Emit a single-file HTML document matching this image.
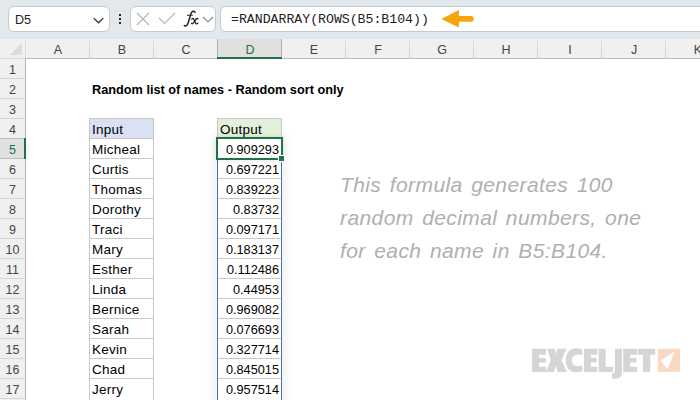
<!DOCTYPE html>
<html><head><meta charset="utf-8">
<style>
*{margin:0;padding:0;box-sizing:border-box}
html,body{width:700px;height:400px;overflow:hidden;background:#fff;font-family:"Liberation Sans",sans-serif}
body{position:relative}
div,span,svg{position:absolute}
.box{background:#fff;border:1px solid #c6cacd;border-radius:6px}
.ch{top:40px;height:19px;width:64px;font-size:12.5px;color:#444;text-align:center;line-height:20px}
.rh{left:0;width:25px;height:20px;font-size:12.5px;color:#444;text-align:center;line-height:22px}
.vl{width:1px;background:#d4d4d4}
.hl{height:1px;background:#d4d4d4}
.nm{left:92px;height:20px;font-size:13.5px;line-height:21px;color:#000;white-space:nowrap;letter-spacing:0.25px}
.nu{left:218px;width:61px;height:20px;font-size:12.72px;line-height:22px;color:#000;white-space:nowrap;text-align:right}
.note{left:340px;font-size:21px;line-height:24px;color:#afafaf;white-space:nowrap;font-style:italic;letter-spacing:0.4px;word-spacing:2.3px}
</style></head><body>

<div style="left:0;top:0;width:700px;height:39px;background:#e2e8ec"></div>
<div class="box" style="left:8px;top:6px;width:102px;height:26px"></div>
<span style="left:15px;top:10.5px;font-size:12.6px;line-height:18px;color:#222">D5</span>
<svg style="left:92px;top:15px" width="13" height="10" viewBox="0 0 13 10"><path d="M1.7 3.1 L6.5 7.8 L11.3 3.1" fill="none" stroke="#333" stroke-width="1.3"/></svg>
<div style="left:119px;top:14px;width:2px;height:2px;background:#222"></div>
<div style="left:119px;top:18px;width:2px;height:2px;background:#222"></div>
<div style="left:119px;top:22px;width:2px;height:2px;background:#222"></div>
<div class="box" style="left:130px;top:6px;width:86px;height:26px"></div>
<svg style="left:136px;top:12px" width="14" height="14" viewBox="0 0 14 14"><path d="M1 1 L13 13 M13 1 L1 13" fill="none" stroke="#b4b4b4" stroke-width="1.1"/></svg>
<svg style="left:158px;top:12px" width="18" height="13" viewBox="0 0 18 13"><path d="M1 6 L6.5 11.5 L17 1" fill="none" stroke="#b4b4b4" stroke-width="1.1"/></svg>
<svg style="left:180px;top:8px" width="22" height="22" viewBox="180 8 22 22"><g fill="none" stroke="#222" stroke-linecap="round"><path d="M195 12.4C194.6 11.1 192.8 10.7 191.7 12.2C190.6 13.8 188.6 22.2 187.6 24.3C186.9 25.8 185.2 26.4 184.3 25.5" stroke-width="1.5"/><path d="M187.3 15.2H192.3" stroke-width="1.1"/><path d="M191.7 19.1C192.5 18.1 193.5 18.2 194 19.5L195.5 22.9C196 24 197 24.1 197.8 23.3" stroke-width="1.3"/><path d="M198 18.9C197.2 18.2 196.4 18.5 195.8 19.3L193.6 22.7C192.9 23.8 192 24 191.5 23.4" stroke-width="1.3"/></g></svg>
<svg style="left:202px;top:15px" width="12" height="9" viewBox="0 0 12 9"><path d="M1 2 L6 7 L11 2" fill="none" stroke="#8a8a8a" stroke-width="1.1"/></svg>
<div class="box" style="left:220px;top:6px;width:500px;height:26px"></div>
<span style="left:231px;top:10px;font-family:'Liberation Mono',monospace;font-size:13.2px;line-height:19px;color:#222">=RANDARRAY(ROWS(B5:B104))</span>
<svg style="left:435px;top:5px" width="45" height="30" viewBox="0 0 45 30"><path d="M6.4 13.9 L23.9 5.1 L23.9 11.1 L36.1 11.1 A2.78 2.78 0 0 1 36.1 16.65 L23.9 16.65 L23.9 22.5 Z" fill="#f6a50a"/></svg>
<div style="left:0;top:39px;width:700px;height:20px;background:#f0f0f0"></div>
<div style="left:0;top:59px;width:25px;height:341px;background:#f0f0f0"></div>
<div style="left:218px;top:39px;width:63px;height:19px;background:#e0e0e0"></div>
<div style="left:0;top:139px;width:25px;height:19px;background:#e0e0e0"></div>
<div class="vl" style="left:89px;top:41px;height:17px;background:#d6d6d6"></div>
<div class="vl" style="left:153px;top:41px;height:17px;background:#d6d6d6"></div>
<div class="vl" style="left:217px;top:39px;height:19px;background:#b0b0b0"></div>
<div class="vl" style="left:281px;top:39px;height:19px;background:#b0b0b0"></div>
<div class="vl" style="left:345px;top:41px;height:17px;background:#d6d6d6"></div>
<div class="vl" style="left:409px;top:41px;height:17px;background:#d6d6d6"></div>
<div class="vl" style="left:473px;top:41px;height:17px;background:#d6d6d6"></div>
<div class="vl" style="left:537px;top:41px;height:17px;background:#d6d6d6"></div>
<div class="vl" style="left:601px;top:41px;height:17px;background:#d6d6d6"></div>
<div class="vl" style="left:665px;top:41px;height:17px;background:#d6d6d6"></div>
<div class="vl" style="left:729px;top:41px;height:17px;background:#d6d6d6"></div>
<div class="hl" style="left:0;top:78px;width:25px;background:#d6d6d6"></div>
<div class="hl" style="left:0;top:98px;width:25px;background:#d6d6d6"></div>
<div class="hl" style="left:0;top:118px;width:25px;background:#d6d6d6"></div>
<div class="hl" style="left:0;top:138px;width:25px;background:#bdbdbd"></div>
<div class="hl" style="left:0;top:158px;width:25px;background:#bdbdbd"></div>
<div class="hl" style="left:0;top:178px;width:25px;background:#d6d6d6"></div>
<div class="hl" style="left:0;top:198px;width:25px;background:#d6d6d6"></div>
<div class="hl" style="left:0;top:218px;width:25px;background:#d6d6d6"></div>
<div class="hl" style="left:0;top:238px;width:25px;background:#d6d6d6"></div>
<div class="hl" style="left:0;top:258px;width:25px;background:#d6d6d6"></div>
<div class="hl" style="left:0;top:278px;width:25px;background:#d6d6d6"></div>
<div class="hl" style="left:0;top:298px;width:25px;background:#d6d6d6"></div>
<div class="hl" style="left:0;top:318px;width:25px;background:#d6d6d6"></div>
<div class="hl" style="left:0;top:338px;width:25px;background:#d6d6d6"></div>
<div class="hl" style="left:0;top:358px;width:25px;background:#d6d6d6"></div>
<div class="hl" style="left:0;top:378px;width:25px;background:#d6d6d6"></div>
<div class="hl" style="left:0;top:398px;width:25px;background:#d6d6d6"></div>
<div style="left:0;top:58px;width:25px;height:1px;background:#d8d8d8"></div>
<div style="left:25px;top:58px;width:675px;height:1px;background:#bdbdbd"></div>
<div style="left:25px;top:40px;width:1px;height:18px;background:#dcdcdc"></div>
<div style="left:25px;top:39px;width:1px;height:1px;background:#fff"></div>
<div style="left:25px;top:59px;width:1px;height:341px;background:#b5b5b5"></div>
<svg style="left:10px;top:43px" width="13" height="12" viewBox="0 0 13 12"><path d="M12 0 L12 12 L0 12 Z" fill="#dcdcdc"/></svg>
<div style="left:217px;top:57px;width:65px;height:2px;background:#217346"></div>
<div style="left:24px;top:138px;width:2px;height:21px;background:#217346"></div>
<span class="ch" style="left:26px;color:#444">A</span>
<span class="ch" style="left:90px;color:#444">B</span>
<span class="ch" style="left:154px;color:#444">C</span>
<span class="ch" style="left:218px;color:#217346">D</span>
<span class="ch" style="left:282px;color:#444">E</span>
<span class="ch" style="left:346px;color:#444">F</span>
<span class="ch" style="left:410px;color:#444">G</span>
<span class="ch" style="left:474px;color:#444">H</span>
<span class="ch" style="left:538px;color:#444">I</span>
<span class="ch" style="left:602px;color:#444">J</span>
<span class="ch" style="left:666px;color:#444">K</span>
<span class="rh" style="top:59px;color:#444">1</span>
<span class="rh" style="top:79px;color:#444">2</span>
<span class="rh" style="top:99px;color:#444">3</span>
<span class="rh" style="top:119px;color:#444">4</span>
<span class="rh" style="top:139px;color:#217346">5</span>
<span class="rh" style="top:159px;color:#444">6</span>
<span class="rh" style="top:179px;color:#444">7</span>
<span class="rh" style="top:199px;color:#444">8</span>
<span class="rh" style="top:219px;color:#444">9</span>
<span class="rh" style="top:239px;color:#444">10</span>
<span class="rh" style="top:259px;color:#444">11</span>
<span class="rh" style="top:279px;color:#444">12</span>
<span class="rh" style="top:299px;color:#444">13</span>
<span class="rh" style="top:319px;color:#444">14</span>
<span class="rh" style="top:339px;color:#444">15</span>
<span class="rh" style="top:359px;color:#444">16</span>
<span class="rh" style="top:379px;color:#444">17</span>
<span style="left:92px;top:80px;height:20px;line-height:20px;font-size:12.72px;font-weight:bold;color:#000;white-space:nowrap">Random list of names - Random sort only</span>
<div style="left:217px;top:138px;width:65px;height:300px;background:#fff;box-shadow:0 0 14px rgba(0,0,0,0.10)"></div>
<div style="left:90px;top:119px;width:63px;height:19px;background:#d9e1f2"></div>
<div style="left:218px;top:119px;width:63px;height:19px;background:#e2efda"></div>
<div class="hl" style="left:89px;top:118px;width:65px;background:#c8c8c8"></div>
<div class="hl" style="left:217px;top:118px;width:65px;background:#c8c8c8"></div>
<div class="hl" style="left:89px;top:138px;width:65px;background:#c8c8c8"></div>
<div class="hl" style="left:217px;top:138px;width:65px;background:#c8c8c8"></div>
<div class="hl" style="left:89px;top:158px;width:65px;background:#c8c8c8"></div>
<div class="hl" style="left:217px;top:158px;width:65px;background:#c8c8c8"></div>
<div class="hl" style="left:89px;top:178px;width:65px;background:#c8c8c8"></div>
<div class="hl" style="left:217px;top:178px;width:65px;background:#c8c8c8"></div>
<div class="hl" style="left:89px;top:198px;width:65px;background:#c8c8c8"></div>
<div class="hl" style="left:217px;top:198px;width:65px;background:#c8c8c8"></div>
<div class="hl" style="left:89px;top:218px;width:65px;background:#c8c8c8"></div>
<div class="hl" style="left:217px;top:218px;width:65px;background:#c8c8c8"></div>
<div class="hl" style="left:89px;top:238px;width:65px;background:#c8c8c8"></div>
<div class="hl" style="left:217px;top:238px;width:65px;background:#c8c8c8"></div>
<div class="hl" style="left:89px;top:258px;width:65px;background:#c8c8c8"></div>
<div class="hl" style="left:217px;top:258px;width:65px;background:#c8c8c8"></div>
<div class="hl" style="left:89px;top:278px;width:65px;background:#c8c8c8"></div>
<div class="hl" style="left:217px;top:278px;width:65px;background:#c8c8c8"></div>
<div class="hl" style="left:89px;top:298px;width:65px;background:#c8c8c8"></div>
<div class="hl" style="left:217px;top:298px;width:65px;background:#c8c8c8"></div>
<div class="hl" style="left:89px;top:318px;width:65px;background:#c8c8c8"></div>
<div class="hl" style="left:217px;top:318px;width:65px;background:#c8c8c8"></div>
<div class="hl" style="left:89px;top:338px;width:65px;background:#c8c8c8"></div>
<div class="hl" style="left:217px;top:338px;width:65px;background:#c8c8c8"></div>
<div class="hl" style="left:89px;top:358px;width:65px;background:#c8c8c8"></div>
<div class="hl" style="left:217px;top:358px;width:65px;background:#c8c8c8"></div>
<div class="hl" style="left:89px;top:378px;width:65px;background:#c8c8c8"></div>
<div class="hl" style="left:217px;top:378px;width:65px;background:#c8c8c8"></div>
<div class="vl" style="left:89px;top:118px;height:282px;background:#c8c8c8"></div>
<div class="vl" style="left:153px;top:118px;height:282px;background:#c8c8c8"></div>
<div class="vl" style="left:217px;top:118px;height:22px;background:#c8c8c8"></div>
<div class="vl" style="left:281px;top:118px;height:22px;background:#c8c8c8"></div>
<div class="vl" style="left:217px;top:160px;height:240px;background:#4472c4"></div>
<div class="vl" style="left:281px;top:161px;height:239px;background:#4472c4"></div>
<span class="nm" style="top:119px">Input</span>
<span class="nm" style="left:220px;top:119px">Output</span>
<span class="nm" style="top:139px">Micheal</span>
<span class="nu" style="top:139px">0.909293</span>
<span class="nm" style="top:159px">Curtis</span>
<span class="nu" style="top:159px">0.697221</span>
<span class="nm" style="top:179px">Thomas</span>
<span class="nu" style="top:179px">0.839223</span>
<span class="nm" style="top:199px">Dorothy</span>
<span class="nu" style="top:199px">0.83732</span>
<span class="nm" style="top:219px">Traci</span>
<span class="nu" style="top:219px">0.097171</span>
<span class="nm" style="top:239px">Mary</span>
<span class="nu" style="top:239px">0.183137</span>
<span class="nm" style="top:259px">Esther</span>
<span class="nu" style="top:259px">0.112486</span>
<span class="nm" style="top:279px">Linda</span>
<span class="nu" style="top:279px">0.44953</span>
<span class="nm" style="top:299px">Bernice</span>
<span class="nu" style="top:299px">0.969082</span>
<span class="nm" style="top:319px">Sarah</span>
<span class="nu" style="top:319px">0.076693</span>
<span class="nm" style="top:339px">Kevin</span>
<span class="nu" style="top:339px">0.327714</span>
<span class="nm" style="top:359px">Chad</span>
<span class="nu" style="top:359px">0.845015</span>
<span class="nm" style="top:379px">Jerry</span>
<span class="nu" style="top:379px">0.957514</span>
<div style="left:216px;top:137px;width:67px;height:23px;border:2px solid #217346;box-shadow:0 0 5px rgba(0,0,0,0.10)"></div>
<div style="left:278px;top:155px;width:7px;height:7px;background:#fff"></div>
<div style="left:279px;top:156px;width:5px;height:5px;background:#217346"></div>
<span class="note" style="top:173px">This formula generates 100</span>
<span class="note" style="top:206px">random decimal numbers, one</span>
<span class="note" style="top:238.5px">for each name in B5:B104.</span>
<svg style="left:525px;top:345px" width="160" height="40" viewBox="525 345 160 40"><g fill="#d3d5d6">
<path d="M532 348.8H546V354.8H539V358.1H545.9V362.5H539V366.8H546V371.9H532Z"/>
<path d="M547 348.8H554.5L555.8 354L557.1 348.8H566.5L561.3 360.2L567 371.9H557.5L555.8 364.9L554.1 371.9H545.8L550.75 360.2Z"/>
<path d="M582 349.3C580 348.5 578 348.2 575.5 348.2C569.5 348.2 565.75 353.3 565.75 360.2C565.75 367.1 569.5 372.2 575.5 372.2C578 372.2 580.5 371.8 582.5 371V365.6C581 366 579.8 366.1 578.5 366.1C574.5 366.1 571.75 363.9 571.75 360.2C571.75 356.6 574.5 354.4 578.5 354.4C579.8 354.4 581 354.6 582.5 355Z"/>
<path d="M584 348.8H597.3V354.8H591V358.1H596.5V362.5H591V366.8H597.3V371.9H584Z"/>
<path d="M598.7 348.8H605.6V366.8H613V371.9H598.7Z"/>
<path d="M614.9 348.8H621.9V372.5Q621.9 378.8 615 378.8H612.1V373.5Q614.9 373.2 614.9 370Z"/>
<path d="M623.2 348.8H637.2V354.8H630.2V358.1H636.5V362.5H630.2V366.8H637.2V371.9H623.2Z"/>
<path d="M638 348.8H655.2V354.8H650.3V371.9H643V354.8H638Z"/>
</g>
<rect x="657.8" y="348.8" width="22.2" height="23" fill="#f9d9c2"/>
<path d="M674.5 351.5L660.5 360.5L667.5 369.2Z" fill="#fff"/>
</svg>
</body></html>
